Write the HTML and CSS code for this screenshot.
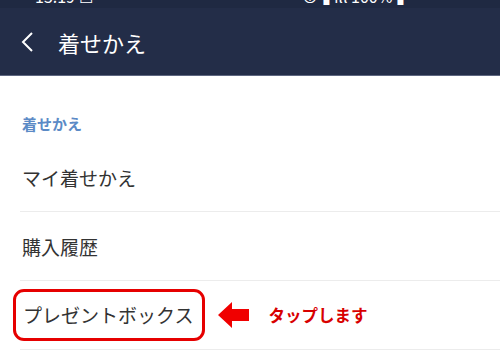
FILE: index.html
```html
<!DOCTYPE html>
<html lang="ja">
<head>
  <meta charset="UTF-8">
  <title>着せかえ</title>
  <link rel="stylesheet" href="styles.css">
</head>
<body>
  <!-- status bar, cut off at the top -->
  <div class="status">
    <span class="time">15:19 ☐</span>
    <span class="icons">⊕ ▮ ıll 100% ▮</span>
  </div>

  <header class="appbar">
    <svg class="back" width="14" height="22" viewBox="0 0 14 22">
      <polyline points="12,2 3,11 12,20" fill="none" stroke="#ffffff" stroke-width="2"/>
    </svg>
    <h1>着せかえ</h1>
  </header>

  <div class="section-title">着せかえ</div>

  <ul class="menu">
    <li class="item"><span>マイ着せかえ</span></li>
    <li class="item"><span>購入履歴</span></li>
    <li class="item present">
      <span class="boxed">プレゼントボックス</span>
      <svg class="arrow" width="32" height="28" viewBox="0 0 32 28">
        <polygon points="0,14 14,1 14,8 31,8 31,20 14,20 14,27" fill="#f00000"/>
      </svg>
      <span class="note">タップします</span>
    </li>
  </ul>
</body>
</html>
```

FILE: styles.css
```css
body {
  margin: 0;
  width: 500px;
  height: 350px;
  overflow: hidden;
  background: #ffffff;
  font-family: "Noto Sans CJK JP", "Noto Sans", sans-serif;
}
.status {
  height: 8px;
  background: #1f2942;
  overflow: hidden;
  display: flex;
  justify-content: space-between;
  padding: 0 95px 0 35px;
  color: #ffffff;
  font-size: 16px;
  line-height: 16px;
}
.status span {
  margin-top: -12px;
}
.appbar {
  height: 67px;
  background: #232d48;
  border-bottom: 1px solid #5d6680;
  display: flex;
  align-items: center;
}
.back {
  margin-left: 20px;
  margin-right: 24px;
}
.appbar h1 {
  margin: 0;
  color: #ffffff;
  font-size: 22px;
  font-weight: normal;
  line-height: 1;
}
.section-title {
  margin: 39px 0 0 22px;
  color: #5b8ac6;
  font-size: 15px;
  font-weight: bold;
  line-height: 18px;
}
.menu {
  list-style: none;
  margin: 10px 0 0 20px;
  padding: 0;
}
.item {
  height: 68px;
  border-bottom: 1px solid #ececec;
  display: flex;
  align-items: center;
  padding-left: 2px;
  color: #333333;
  font-size: 19px;
}
.boxed {
  margin-left: -9px;
  padding: 9px 9px 10px 7px;
  border: 3px solid #e60000;
  border-radius: 11px;
}
.arrow {
  margin-left: 13px;
}
.note {
  margin-left: 18px;
  color: #d80000;
  font-size: 16.5px;
  font-weight: bold;
}
```
